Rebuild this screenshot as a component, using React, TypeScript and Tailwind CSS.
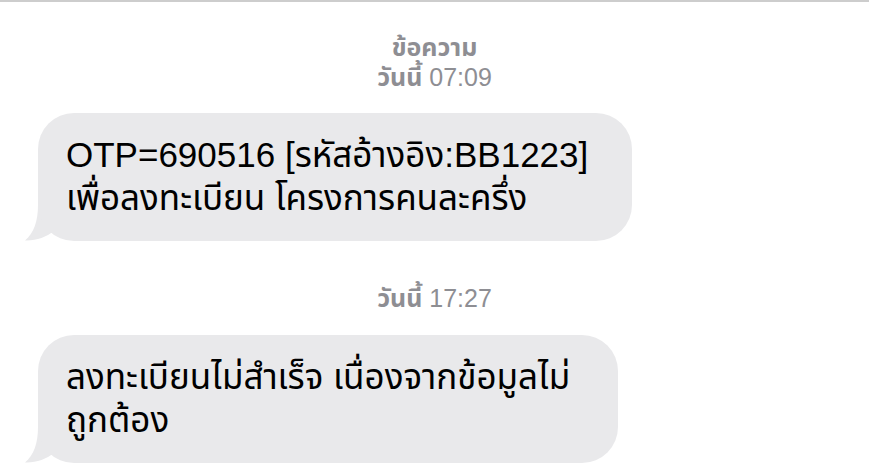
import React from 'react';

const font = { fontFamily: '"Liberation Sans", "Noto Sans Thai", "Noto Sans", "DejaVu Sans", sans-serif' };

const Tail: React.FC = () => (
  <svg className="absolute -left-[14px] bottom-0" width="40" height="36" viewBox="0 0 40 36">
    <path d="M14 0 C14 16 10 28 1 35.5 C12 36 22 32 30 26 L40 0 Z" fill="#e9e9eb" />
  </svg>
);

const Bubble: React.FC<{ lines: string[]; width: string }> = ({ lines, width }) => (
  <div className={`relative ml-[38px] ${width}`}>
    <Tail />
    <div className="relative rounded-[36px] bg-[#e9e9eb] pl-[28px] pr-4 pt-[20px] pb-[22px] text-[35px] leading-[43px] text-black">
      {lines.map(l => (
        <div key={l} className="whitespace-nowrap">{l}</div>
      ))}
    </div>
  </div>
);

export default function App() {
  return (
    <div className="w-[869px] h-[474px] overflow-hidden bg-white border-t-2 border-[#cdcdcd]" style={font}>
      <div className="flex flex-col items-center pt-[30px] text-[25px] leading-[30px] text-[#8e8e93]">
        <div className="font-bold">ข้อความ</div>
        <div><span className="font-bold">วันนี้</span> 07:09</div>
      </div>
      <div className="mt-[21px]">
        <Bubble width="w-[594px]" lines={['OTP=690516 [รหัสอ้างอิง:BB1223]', 'เพื่อลงทะเบียน โครงการคนละครึ่ง']} />
      </div>
      <div className="flex justify-center pt-[42px] text-[25px] leading-[30px] text-[#8e8e93]">
        <div><span className="font-bold">วันนี้</span> 17:27</div>
      </div>
      <div className="mt-[22px]">
        <Bubble width="w-[580px]" lines={['ลงทะเบียนไม่สำเร็จ เนื่องจากข้อมูลไม่', 'ถูกต้อง']} />
      </div>
    </div>
  );
}
